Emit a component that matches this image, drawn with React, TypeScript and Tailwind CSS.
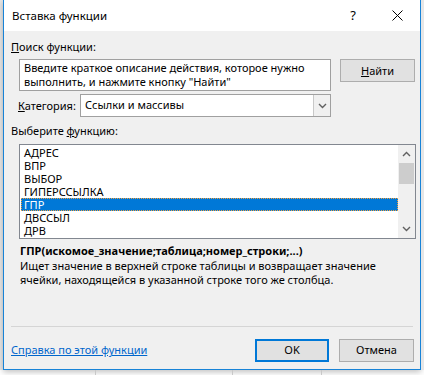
import React from "react";

const font = { fontFamily: '"Noto Sans", "Open Sans", sans-serif' };

const functions = ["АДРЕС", "ВПР", "ВЫБОР", "ГИПЕРССЫЛКА", "ГПР", "ДВССЫЛ", "ДРВ"];

// small chevron used in the select and the scrollbar
const Chevron = ({ up = false, color = "#606060" }: { up?: boolean; color?: string }) => (
  <svg width="9" height="6" viewBox="0 0 9 6" aria-hidden="true">
    <path
      d={up ? "M1 5L4.5 1.5L8 5" : "M1 1L4.5 4.5L8 1"}
      stroke={color}
      strokeWidth="1.4"
      fill="none"
    />
  </svg>
);

export default function App() {
  return (
    <div className="w-[424px] h-[375px] bg-white overflow-hidden text-[11px] text-black" style={font}>
      <div className="flex">
        {/* spreadsheet behind, left strip */}
        <div className="w-[3px] h-[370px] bg-[#e6e6e6]" />
        <div className="w-[418px] h-[370px] border-x border-b border-[#1883d7] bg-[#f0f0f0] flex flex-col shadow-[0_2px_6px_rgba(0,0,0,0.25)]">
          {/* title bar */}
          <div className="h-[31px] bg-white flex items-center">
            <span className="ml-[8px] text-[11.5px]">Вставка функции</span>
            <span className="ml-auto mr-[36px] text-[13px]">?</span>
            <svg width="11" height="11" viewBox="0 0 11 11" className="mr-[17px]" aria-hidden="true">
              <path d="M0.5 0.5L10.5 10.5M10.5 0.5L0.5 10.5" stroke="#000" strokeWidth="1" />
            </svg>
          </div>

          <div className="flex flex-col">
            <div className="mt-[8px] ml-[7px] h-[16px] leading-[16px]">
              <span className="underline">П</span>оиск функции:
            </div>

            <div className="flex mt-[4px]">
              <div className="ml-[15px] w-[312px] h-[32px] bg-white border border-[#a0a0a0] px-[4px] pt-[1px] leading-[14px]">
                Введите краткое описание действия, которое нужно выполнить, и нажмите кнопку "Найти"
              </div>
              <button className="ml-[9px] w-[75px] h-[23px] bg-[#e1e1e1] border border-[#adadad] leading-[20px]">
                <span className="underline">Н</span>айти
              </button>
            </div>

            <div className="flex items-center mt-[3px]">
              <span className="ml-[14px] w-[62px] leading-[16px]">
                <span className="underline">К</span>атегория:
              </span>
              <div className="w-[251px] h-[23px] bg-white border border-[#a0a0a0] flex items-center">
                <span className="ml-[4px]">Ссылки и массивы</span>
                <div className="ml-auto w-[17px] h-full bg-[#f0f0f0] border-l border-[#c8c8c8] flex items-center justify-center">
                  <Chevron />
                </div>
              </div>
            </div>

            <div className="mt-[6px] ml-[7px] h-[16px] leading-[16px]">
              Выберите <span className="underline">ф</span>ункцию:
            </div>

            <div className="mt-[5px] ml-[15px] w-[397px] h-[95px] border border-[#828790] bg-white flex">
              <div className="flex-1 pt-[1px] pl-[1px]">
                {functions.map((f) => (
                  <div
                    key={f}
                    className={
                      f === "ГПР"
                        ? "h-[13px] leading-[13px] pl-[3px] bg-[#0078d7] text-white outline-1 outline-dotted outline-offset-[-1px] outline-[#f0a040]"
                        : "h-[13px] leading-[13px] pl-[3px]"
                    }
                  >
                    {f}
                  </div>
                ))}
              </div>
              <div className="w-[17px] bg-[#f0f0f0] flex flex-col items-center">
                <div className="h-[18px] flex items-center justify-center">
                  <Chevron up />
                </div>
                <div className="w-[15px] h-[21px] bg-[#cdcdcd]" />
                <div className="flex-1" />
                <div className="h-[18px] flex items-center justify-center">
                  <Chevron />
                </div>
              </div>
            </div>

            <div className="mt-[4px] ml-[16px] h-[16px] leading-[16px] font-bold">
              ГПР(искомое_значение;таблица;номер_строки;...)
            </div>
            <div className="ml-[16px] w-[390px] leading-[14px]">
              Ищет значение в верхней строке таблицы и возвращает значение ячейки, находящейся в указанной строке того же столбца.
            </div>

            <div className="mt-[39px] mx-[7px] h-px bg-[#d5d5d5]" />

            <div className="flex items-center mt-[12px]">
              <a className="ml-[7px] text-[#0066cc] underline" href="#">
                Справка по этой функции
              </a>
              <button className="ml-auto w-[74px] h-[23px] bg-[#e1e1e1] border-2 border-[#0078d7]">OK</button>
              <button className="ml-[10px] mr-[6px] w-[75px] h-[23px] bg-[#e1e1e1] border border-[#adadad]">
                Отмена
              </button>
            </div>
          </div>
        </div>
        <div className="w-[3px] h-[370px] bg-[#e6e6e6]" />
      </div>
      <div className="flex h-[5px]">
        <div className="w-[96px] border-r border-[#c8c8c8]" />
        <div className="w-[137px] border-r border-[#c8c8c8]" />
        <div className="w-[89px] border-r border-[#c8c8c8]" />
      </div>
    </div>
  );
}
